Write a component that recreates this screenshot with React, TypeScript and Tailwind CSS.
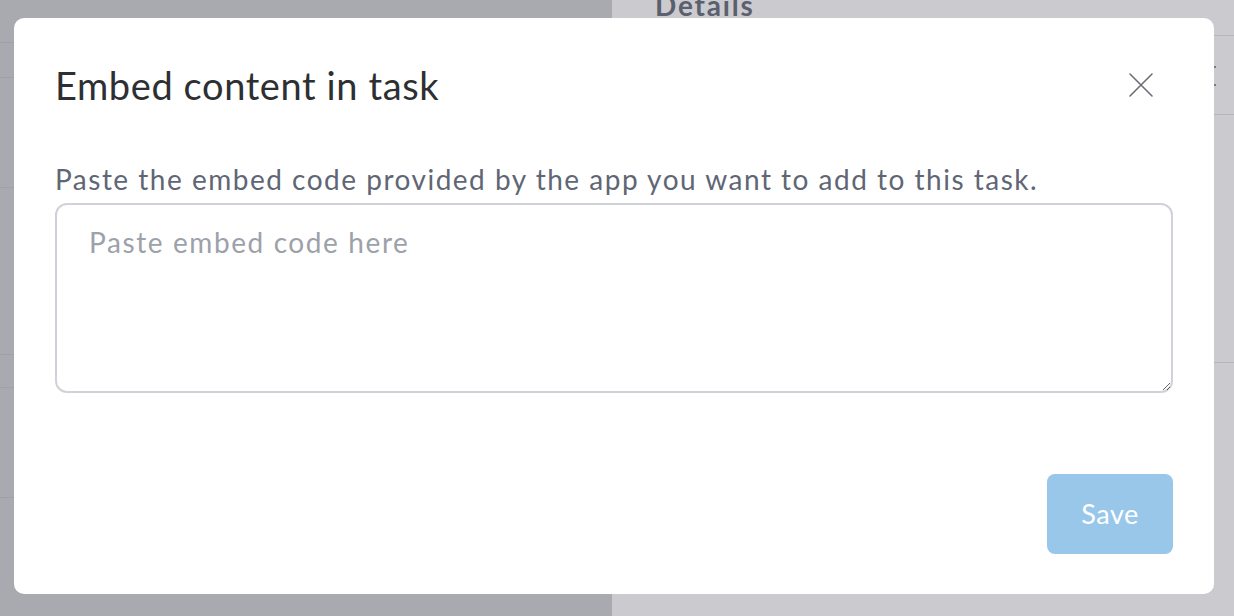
import React from "react";

export default function App() {
  const font = { fontFamily: "Lato, 'Noto Sans', sans-serif" };
  return (
    <div className="relative w-[1234px] h-[616px] overflow-hidden flex" style={font}>
      {/* left background area */}
      <div className="w-[612px] h-full bg-[#a9aab0] flex flex-col">
        <div className="h-[43px] border-b border-[#a0a1a8]" />
        <div className="h-[35px] border-b border-[#a0a1a8]" />
        <div className="h-[110px] border-b border-[#a0a1a8]" />
        <div className="h-[167px] border-b border-[#a0a1a8]" />
        <div className="h-[33px] border-b border-[#a0a1a8]" />
        <div className="h-[110px] border-b border-[#a0a1a8]" />
      </div>
      {/* right details panel */}
      <div className="relative flex-1 h-full bg-[#cbcbcf] flex flex-col">
        <div className="h-[36px] border-b border-[#b6b6ba] pl-[43px]">
          <div className="mt-[-12px] text-[28px] leading-[34px] tracking-[1.8px] font-bold text-[#5b606e]">Details</div>
        </div>
        <div className="h-[79px] border-b border-[#b6b6ba] flex justify-end pr-[18px] pt-[30px]">
          <div className="flex flex-col gap-[16px]">
            <span className="block w-[2px] h-[2px] rounded-full bg-[#5b606e]" />
            <span className="block w-[2px] h-[2px] rounded-full bg-[#5b606e]" />
          </div>
        </div>
        <div className="h-[248px] border-b border-[#b6b6ba]" />
      </div>

      {/* modal */}
      <div className="absolute inset-0 pl-[14px] pt-[18px]">
        <div className="w-[1200px] h-[576px] bg-white rounded-[10px] px-[41px] pt-[45px] flex flex-col">
          <div className="h-[44px] flex items-center justify-between">
            <h2 className="text-[38px] leading-[44px] font-normal text-[#2e2f32] tracking-[0.6px]">
              Embed content in task
            </h2>
            <button className="w-[40px] h-[40px] mr-[12px] flex items-center justify-center text-[#6b6e76]">
              <svg width="26" height="26" viewBox="0 0 26 26" fill="none" stroke="currentColor" strokeWidth="1.6" strokeLinecap="round">
                <path d="M2 2 L24 24 M24 2 L2 24" />
              </svg>
            </button>
          </div>
          <p className="mt-[55px] text-[28px] leading-[34px] tracking-[1.5px] text-[#5f6675]">
            Paste the embed code provided by the app you want to add to this task.
          </p>
          <textarea
            className="mt-[7px] h-[190px] w-full resize-y border-2 border-[#d0d2d7] rounded-[12px] pl-[32px] pt-[20px] text-[28px] leading-[34px] tracking-[1.6px] text-[#2e2f32] placeholder:text-[#9ca1aa] outline-none"
            style={font}
            placeholder="Paste embed code here"
          />
          <button className="mt-[81px] self-end w-[126px] h-[80px] rounded-[8px] bg-[#98c7ea] text-white text-[27px] leading-[32px] tracking-[0.5px]" style={font}>
            Save
          </button>
        </div>
      </div>
    </div>
  );
}
